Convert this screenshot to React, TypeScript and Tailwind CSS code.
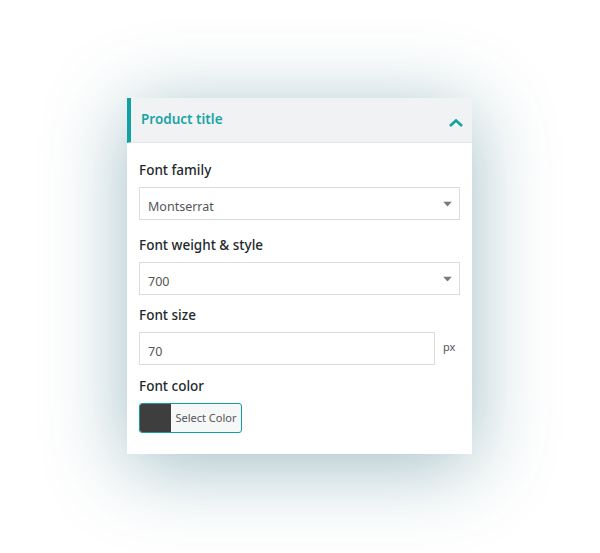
import React from "react";

function Caret() {
  return (
    <svg width="9" height="5" viewBox="0 0 9 5" className="absolute right-[7px] top-1/2 -translate-y-1/2">
      <path d="M0 0 H9 L4.5 5 Z" fill="#7a7a7a" />
    </svg>
  );
}

function Select({ value }: { value: string }) {
  return (
    <div className="relative flex h-[33px] w-full items-center border border-[#dcdcdc] bg-white pl-2 text-[12.5px] text-[#555]">
      <span className="pt-[7px]">{value}</span>
      <Caret />
    </div>
  );
}

function Label({ children }: { children: React.ReactNode }) {
  return <div className="mb-[7px] text-[13.5px] font-medium leading-[20px] text-[#23282d]">{children}</div>;
}

export default function App() {
  return (
    <div
      className="h-[553px] w-[600px] bg-white pl-[127px] pt-[98px]"
      style={{ fontFamily: "'Segoe UI', 'Noto Sans', 'Open Sans', sans-serif" }}
    >
      <div className="w-[345px] bg-white shadow-[0_12px_75px_rgba(30,100,115,0.42)]">
        <div className="flex h-[45px] items-center justify-between border-b border-[#e4e6e9] border-l-4 border-l-[#12a0a3] bg-[#f1f2f4] pl-[10px] pr-[8px]">
          <span className="mb-[1px] text-[13.5px] font-semibold text-[#19a4a6]">Product title</span>
          <svg width="16" height="10" viewBox="0 0 16 10" className="mt-[6px]">
            <path d="M2 8 L8 2.5 L14 8" fill="none" stroke="#12a0a3" strokeWidth="2.6" />
          </svg>
        </div>
        <div className="px-3 pb-[21px] pt-[17px]">
          <Label>Font family</Label>
          <Select value="Montserrat" />
          <div className="mt-[15px]">
            <Label>Font weight &amp; style</Label>
            <Select value="700" />
          </div>
          <div className="mt-[10px]">
            <Label>Font size</Label>
            <div className="flex items-center">
              <div className="flex h-[33px] w-[296px] items-center border border-[#dcdcdc] bg-white pl-2 text-[12.5px] text-[#555]">
                <span className="pt-[7px]">70</span>
              </div>
              <span className="ml-[8px] mb-[3px] text-[11px] text-[#555]">px</span>
            </div>
          </div>
          <div className="mt-[11px]">
            <Label>Font color</Label>
            <div className="flex h-[30px] w-[103px] overflow-hidden rounded-[3px] border border-[#139ea3] bg-[#f6f7f7]">
              <div className="w-[31px] bg-[#3e3e3e]" />
              <div className="flex flex-1 items-center justify-center pt-[1px] text-[11px] text-[#555]">Select Color</div>
            </div>
          </div>
        </div>
      </div>
    </div>
  );
}
